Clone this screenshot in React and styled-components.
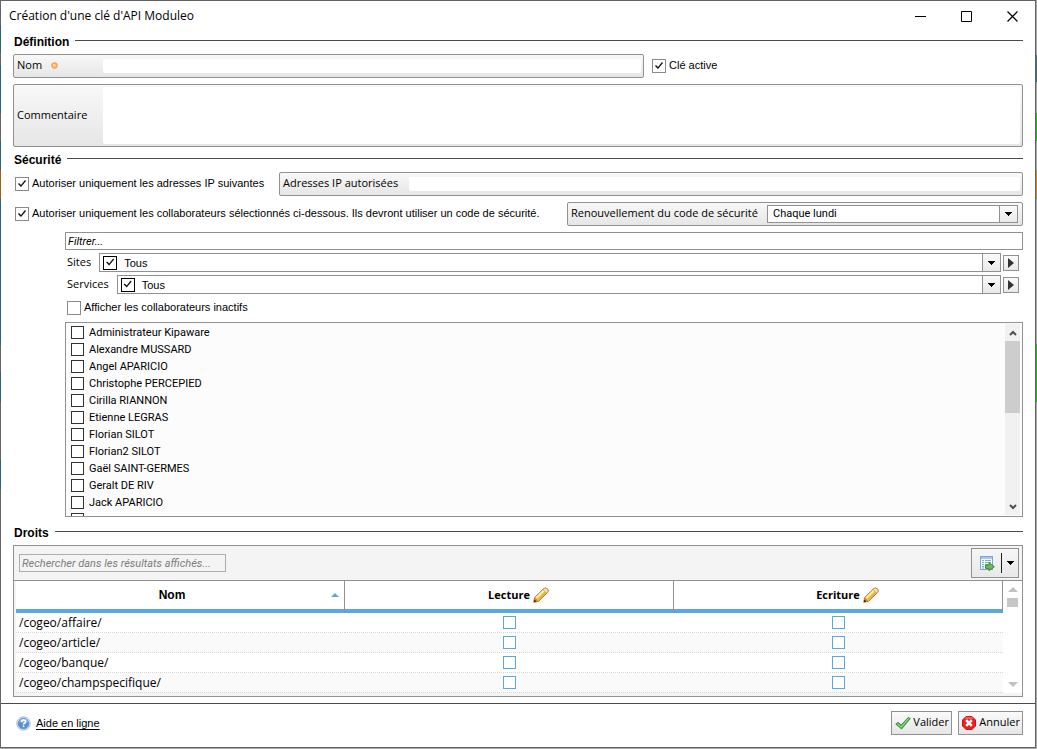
import { useState } from 'react';
import styled, { createGlobalStyle } from 'styled-components';

const GlobalStyle = createGlobalStyle`
  *, *::before, *::after {
    box-sizing: border-box;
  }

  body {
    margin: 0;
    background: #a9a9a9;
    color: #000;
    font-family: 'Liberation Sans', Arial, sans-serif;
    font-size: 11px;
    line-height: 14px;
  }

  button, input, select, textarea {
    font: inherit;
    color: inherit;
    margin: 0;
    padding: 0;
    border: 0;
    border-radius: 0;
    background: none;
    outline: none;
  }
`;

const uiFont = `'Open Sans', 'Noto Sans', sans-serif`;
const narrowFont = `Roboto, 'Liberation Sans', sans-serif`;
const line = '#919191';
const blue = '#5aa9de';

/* Edges of the application behind the dialog */
const Desktop = styled.div`
  min-height: 100vh;
  padding: 0 1px 1px 0;
  background: linear-gradient(
    #a9a9a9 55px, #3d7076 55px 82px, #a9a9a9 82px 113px, #22b422 113px 141px,
    #a9a9a9 141px 170px, #c98a1e 170px 199px, #a9a9a9 199px 344px, #22b422 344px 402px,
    #a9a9a9 402px
  );
`;

const Dialog = styled.main`
  padding-left: 1px;
  background: linear-gradient(
    #666 25px, #2a6478 25px 53px, #666 53px 65px, #2a6478 65px 113px, #666 113px 141px,
    #2a6478 141px 170px, #98651d 170px 199px, #2a6478 199px 345px, #666 345px 372px,
    #2a6478 372px 402px, #666 402px 460px, #2a6478 460px 489px, #666 489px
  );
`;

const DialogInner = styled.div`
  border: 1px solid #626262;
  border-left: 0;
  background: #fff;
`;

const TitleBar = styled.header`
  display: flex;
  align-items: center;
  height: 30px;
  padding-left: 8px;
`;

const Title = styled.h1`
  flex: 1;
  margin: 0;
  font: 400 12px/16px ${uiFont};
`;

const WindowButton = styled.button`
  display: flex;
  align-items: center;
  justify-content: center;
  width: 46px;
  height: 29px;
`;

const Content = styled.div`
  padding: 3px 12px 6px;
`;

const SectionHeader = styled.div`
  display: flex;
  gap: 6px;
  margin-bottom: 4px;
  padding-left: 1px;

  &::after {
    content: '';
    flex: 1;
    height: 1px;
    margin-top: 6px;
    background: #4b4b4b;
  }
`;

const SectionTitle = styled.h2`
  margin: 0;
  font-size: 12px;
  font-weight: 700;
  line-height: 16px;
`;

const Row = styled.div`
  display: flex;
  align-items: center;
  gap: ${(p) => p.$gap || 0}px;
  margin-bottom: 6px;
`;

const CommentRow = styled(Row)`
  margin-bottom: 5px;
`;

const CheckLabel = styled.label`
  display: flex;
  flex: none;
  gap: 3px;
  width: ${(p) => p.$width || 'auto'};
  padding-left: 2px;
  line-height: 12px;
  white-space: nowrap;
`;

const Checkbox = styled.input.attrs({ type: 'checkbox' })`
  appearance: none;
  flex: none;
  display: block;
  width: ${(p) => p.$size || 14}px;
  height: ${(p) => p.$size || 14}px;
  border: 1px solid ${(p) => p.$color || '#8a8a8a'};
  background: #fff;

  &:checked::after {
    content: '';
    display: block;
    width: 12px;
    height: 12px;
    background: #111;
    clip-path: polygon(2px 6px, 3px 5px, 5px 7px, 9px 2px, 10px 3px, 5px 9px);
  }
`;

const Field = styled.div`
  display: flex;
  flex: ${(p) => p.$flex || '1'};
  min-width: 0;
  height: ${(p) => p.$height || 24}px;
  border: 1px solid ${line};
  border-radius: 2px;
  background: linear-gradient(#f8f8f8, #e6e6e6);
`;

const FieldLabel = styled.label`
  display: flex;
  flex: none;
  align-items: center;
  gap: 9px;
  width: ${(p) => p.$width}px;
  padding: 0 0 2px 3px;
  font-family: ${uiFont};
  white-space: nowrap;
`;

const TextInput = styled.input`
  flex: 1;
  min-width: 0;
  margin: 4px 2px 4px 0;
  border-radius: 2px;
  background: #fff;
`;

const TextArea = styled.textarea`
  flex: 1;
  min-width: 0;
  margin: 2px 2px 2px 0;
  border-radius: 2px;
  background: #fff;
  resize: none;
`;

const Combo = styled.div`
  display: flex;
  flex: 1;
  align-items: center;
  min-width: 0;
  border: 1px solid ${line};
  background: #fff;
`;

const SecurityCombo = styled(Combo)`
  margin: 2px 4px 2px 0;
`;

const Select = styled.select`
  appearance: none;
  flex: 1;
  padding-left: 5px;
  font-family: ${narrowFont};
`;

const Arrow = styled.button`
  display: flex;
  flex: none;
  align-items: center;
  justify-content: center;
  align-self: stretch;
  width: 18px;
  border-left: 1px solid ${line};
  background: linear-gradient(#fafafa, #e9e9e9);
`;

const StepButton = styled(Arrow)`
  align-self: center;
  width: 16px;
  height: 16px;
  margin: 0 4px 0 2px;
  border: 1px solid ${line};
`;

const Collaborators = styled.div`
  display: flex;
  flex-direction: column;
  gap: 3px;
  margin: 0 0 8px 52px;
`;

const FilterInput = styled.input`
  height: 18px;
  padding: 0 2px;
  border: 1px solid ${line};
  background: #fff;
  font-family: ${narrowFont};
  font-style: italic;

  &::placeholder {
    color: #000;
    opacity: 1;
  }
`;

const ComboRow = styled.div`
  display: flex;
  gap: 8px;
  height: 19px;
  padding-left: 2px;
  line-height: 18px;
`;

const ComboName = styled.span`
  font-family: ${uiFont};
`;

const ComboGroup = styled.div`
  display: flex;
  flex: 1;
`;

const ComboValue = styled.label`
  display: flex;
  flex: 1;
  align-items: center;
  gap: 7px;
  padding-left: 3px;
`;

const InactiveRow = styled.div`
  padding: 4px 0;
`;

const ListBox = styled.div`
  display: flex;
  height: 195px;
  border: 1px solid ${line};
  background: #fcfcfc;
`;

const List = styled.ul`
  flex: 1;
  margin: 0;
  padding: 1px 0 0 5px;
  overflow: hidden;
  list-style: none;
  font-family: ${narrowFont};
`;

const ListItem = styled.li`
  height: 17px;

  label {
    display: flex;
    align-items: center;
    gap: 5px;
    height: 17px;
  }
`;

const ScrollBar = styled.div`
  display: flex;
  flex-direction: column;
  align-items: center;
  width: 15px;
  margin: 1px 2px 1px 0;
  background: #f1f1f1;
`;

const ScrollButton = styled.button`
  display: flex;
  align-items: center;
  justify-content: center;
  width: 15px;
  height: 17px;
`;

const Thumb = styled.div`
  width: ${(p) => p.$width}px;
  height: ${(p) => p.$height}px;
  margin-bottom: auto;
  background: ${(p) => p.$color};
`;

const Panel = styled.section`
  border: 1px solid ${line};
  background: #f4f4f4;
`;

const Toolbar = styled.div`
  display: flex;
  align-items: center;
  justify-content: space-between;
  height: 35px;
  padding: 0 3px 0 5px;
  border-bottom: 1px solid ${line};
`;

const SearchInput = styled(FilterInput)`
  width: 207px;
  border-color: #adadad;
  background: #f4f4f4;

  &::placeholder {
    color: #7d7d7d;
  }
`;

const ExportButton = styled.button`
  display: flex;
  align-items: center;
  width: 48px;
  height: 30px;
  padding-left: 7px;
  border: 1px solid ${line};
  background: linear-gradient(#f6f6f6, #e8e8e8);
`;

const ExportDivider = styled.span`
  width: 1px;
  height: 20px;
  margin: 0 5px 0 6px;
  background: #222;
`;

const TableArea = styled.div`
  display: flex;
  padding: 0 0 3px 2px;
`;

const Table = styled.table`
  flex: 1;
  width: 100%;
  border-collapse: separate;
  border-spacing: 0;
  table-layout: fixed;
  background: #fff;
  font-family: ${uiFont};
  font-size: 12px;
`;

const HeadCell = styled.th`
  height: 32px;
  padding: 0;
  border-right: 1px solid ${line};
  background: linear-gradient(#fff 28px, ${blue} 28px);
`;

const HeadContent = styled.div`
  display: flex;
  align-items: center;
  justify-content: center;
  gap: 3px;
  height: 24px;
  margin-bottom: 4px;
  font-weight: 700;
  font-size: 11px;

  /* the pencil hangs after the centred name */
  svg {
    flex: none;
    margin-right: -19px;
  }
`;

const SortContent = styled(HeadContent)`
  font-family: 'Liberation Sans', Arial, sans-serif;
  font-size: 12px;

  span {
    flex: 1;
  }

  svg {
    margin-right: 5px;
  }
`;

const Cell = styled.td`
  height: 20px;
  padding: 0 3px;
  border-bottom: 1px dotted #d5d5d5;
  line-height: 19px;

  tr:nth-child(even) & {
    background: #fafafa;
  }

  input {
    margin: 0 auto;
  }
`;

const TableScroll = styled(ScrollBar)`
  flex: none;
  width: 19px;
  margin: 0;
  background: #fff;
`;

const Footer = styled.footer`
  display: flex;
  align-items: center;
  gap: 6px;
  height: 44px;
  padding: 0 12px 5px 15px;
  border-top: 1px solid #4b4b4b;
`;

const HelpLink = styled.a`
  display: flex;
  align-items: center;
  gap: 5px;
  margin-right: auto;
  color: #000;
  text-underline-offset: 2px;
`;

const ActionButton = styled.button`
  display: flex;
  align-items: center;
  justify-content: space-between;
  width: ${(p) => p.$width}px;
  height: 24px;
  padding: 0 2px 0 3px;
  border: 1px solid ${line};
  background: linear-gradient(#fafafa, #e6e6e6);
  font-family: ${uiFont};

  span {
    padding-bottom: 2px;
  }
`;

const CaretDown = () => (
  <svg width="8" height="4" shapeRendering="crispEdges" aria-hidden="true">
    <path d="M0 0h7v1h-1v1h-1v1h-1v1h-1v-1h-1v-1h-1v-1h-1z" />
  </svg>
);

const CaretRight = () => (
  <svg width="6" height="10" aria-hidden="true">
    <path d="M0 0l6 5l-6 5z" fill="#333" />
  </svg>
);

const Chevron = ({ down }) => (
  <svg width="8" height="6" aria-hidden="true">
    <path d={down ? 'M1 1l3 3l3-3' : 'M1 5l3-3l3 3'} fill="none" stroke="#505050" strokeWidth="2" />
  </svg>
);

const Triangle = ({ down, width = 10, color = '#c2c2c2' }) => (
  <svg width={width} height={width / 2} viewBox="0 0 10 5" aria-hidden="true">
    <path d={down ? 'M0 0h10l-5 5z' : 'M0 5h10l-5-5z'} fill={color} />
  </svg>
);

const RequiredDot = () => (
  <svg width="7" height="7" aria-hidden="true">
    <circle cx="3.5" cy="3.5" r="2.8" fill="#fbc27a" stroke="#ea8e42" />
    <circle cx="3" cy="3" r="1" fill="#fde0b0" />
  </svg>
);

const Pencil = () => (
  <svg width="16" height="16" viewBox="0 0 16 16" aria-hidden="true">
    <path d="M.8 15.2l.8-4.600L10.600 1.700q2-1.500 3.800.1t.2 3.700L5.600 14.300z" fill="#f5c95a" stroke="#b5762a" />
    <path d="M3.400 10.800l7.600-7.500" stroke="#fdf0b4" strokeWidth="1.800" />
    <path d="M5.200 12.600l7.600-7.400" stroke="#e3a838" strokeWidth="1.200" />
    <path d="M10 2.600l3.600 3.400l1-1q1.200-1.300-.3-2.800t-3-.7z" fill="#f8e2bc" stroke="#c88b4a" strokeWidth=".6" />
    <path d="M2.200 10.800l3 3l-3.700 1z" fill="#d98a24" />
    <path d="M.8 15.200l.5-2.700l2.200 2z" fill="#3a2410" />
  </svg>
);

const ExportIcon = () => (
  <svg width="16" height="16" viewBox="0 0 16 16" aria-hidden="true">
    <rect x="1.500" y="1.500" width="12" height="13" fill="#f4f9ff" stroke="#7ba4dc" />
    <rect x="2" y="2" width="11" height="2" fill="#a9c6ee" />
    <path d="M3 5.500h2M6 5.500h6M3 7.500h2M6 7.500h6M3 9.500h2M6 9.500h3M3 11.500h2M3 13h2" stroke="#7fb894" />
    <path d="M6.500 10h3.500V7.500l5.400 4.200l-5.400 4v-2.300H6.500z" fill="#6cbb58" stroke="#33752c" strokeWidth=".8" />
  </svg>
);

const ValidIcon = () => (
  <svg width="16" height="14" viewBox="0 0 16 14" aria-hidden="true">
    <path d="M.8 8.200L3 6.200l3.200 2.800L13.400 1.300l1.900 1.300L6.600 13z" fill="#5db558" stroke="#2f8137" strokeWidth=".8" />
    <path d="M2.500 8l3.700 3l7.300-8.500" fill="none" stroke="#9bd88e" />
  </svg>
);

const CancelIcon = () => (
  <svg width="14" height="14" viewBox="1 1 14 14" aria-hidden="true">
    <path d="M5 1.500h6l3.500 3.500v6l-3.500 3.500H5l-3.500-3.500V5z" fill="#f01f1f" stroke="#d80e0e" />
    <path d="M5 2.200h6l1.500 1.500h-9z" fill="#ff7070" />
    <path d="M5.200 5.200l5.600 5.600M10.800 5.200l-5.600 5.600" stroke="#fff" strokeWidth="2.600" />
  </svg>
);

const HelpIcon = () => (
  <svg width="15" height="15" viewBox="0 0 15 15" aria-hidden="true">
    <circle cx="7.500" cy="7.500" r="6.800" fill="#d9e5f4" stroke="#9db8db" strokeWidth=".8" />
    <circle cx="7.500" cy="7.500" r="5.300" fill="#5f91cd" stroke="#4a78b3" strokeWidth=".6" />
    <path d="M3 6q1-3.300 4.500-3.300T12 6q-4 1.500-9 0z" fill="#94b8e4" />
    <path d="M5.600 6q0-1.900 2-1.900t2 1.600q0 1-1.100 1.500t-1 1.400" fill="none" stroke="#fff" strokeWidth="1.500" />
    <rect x="6.800" y="9.600" width="1.500" height="1.500" fill="#fff" />
  </svg>
);

const collaborators = [
  'Administrateur Kipaware',
  'Alexandre MUSSARD',
  'Angel APARICIO',
  'Christophe PERCEPIED',
  'Cirilla RIANNON',
  'Etienne LEGRAS',
  'Florian SILOT',
  'Florian2 SILOT',
  'Gaël SAINT-GERMES',
  'Geralt DE RIV',
  'Jack APARICIO',
  '',
];

const routes = ['/cogeo/affaire/', '/cogeo/article/', '/cogeo/banque/', '/cogeo/champspecifique/'];

function Section({ title }) {
  return (
    <SectionHeader>
      <SectionTitle>{title}</SectionTitle>
    </SectionHeader>
  );
}

function FilterCombo({ name }) {
  return (
    <ComboRow>
      <ComboName>{name}</ComboName>
      <ComboGroup>
        <Combo>
          <ComboValue>
            <Checkbox $color="#000" defaultChecked />
            Tous
          </ComboValue>
          <Arrow aria-label={name}><CaretDown /></Arrow>
        </Combo>
        <StepButton aria-label={name}><CaretRight /></StepButton>
      </ComboGroup>
    </ComboRow>
  );
}

function App() {
  const [renewal, setRenewal] = useState('lundi');

  return (
    <>
      <GlobalStyle />
      <Desktop>
        <Dialog>
          <DialogInner>
            <TitleBar>
              <Title>Création d'une clé d'API Moduleo</Title>
              <WindowButton aria-label="Réduire">
                <svg width="11" height="11"><path d="M0 5.500h11" stroke="#000" /></svg>
              </WindowButton>
              <WindowButton aria-label="Agrandir">
                <svg width="11" height="11"><path d="M.5.5h10v10H.5z" fill="none" stroke="#000" /></svg>
              </WindowButton>
              <WindowButton aria-label="Fermer">
                <svg width="11" height="11"><path d="M.5.5l10 10M10.500.5l-10 10" stroke="#000" strokeWidth="1.200" /></svg>
              </WindowButton>
            </TitleBar>

            <Content>
              <Section title="Définition" />
              <Row $gap={6}>
                <Field $flex="0 1 631px">
                  <FieldLabel htmlFor="nom" $width={89}>Nom <RequiredDot /></FieldLabel>
                  <TextInput id="nom" />
                </Field>
                <CheckLabel>
                  <Checkbox defaultChecked />
                  Clé active
                </CheckLabel>
              </Row>
              <CommentRow>
                <Field $height={63}>
                  <FieldLabel htmlFor="commentaire" $width={89}>Commentaire</FieldLabel>
                  <TextArea id="commentaire" />
                </Field>
              </CommentRow>

              <Section title="Sécurité" />
              <Row>
                <CheckLabel $width="266px">
                  <Checkbox defaultChecked />
                  Autoriser uniquement les adresses IP suivantes
                </CheckLabel>
                <Field>
                  <FieldLabel htmlFor="adresses" $width={129}>Adresses IP autorisées</FieldLabel>
                  <TextInput id="adresses" />
                </Field>
              </Row>
              <Row>
                <CheckLabel $width="554px">
                  <Checkbox defaultChecked />
                  Autoriser uniquement les collaborateurs sélectionnés ci-dessous. Ils devront utiliser un code de sécurité.
                </CheckLabel>
                <Field>
                  <FieldLabel htmlFor="renouvellement" $width={199}>Renouvellement du code de sécurité</FieldLabel>
                  <SecurityCombo>
                    <Select id="renouvellement" value={renewal} onChange={(e) => setRenewal(e.target.value)}>
                      <option value="lundi">Chaque lundi</option>
                    </Select>
                    <Arrow as="span"><CaretDown /></Arrow>
                  </SecurityCombo>
                </Field>
              </Row>

              <Collaborators>
                <FilterInput placeholder="Filtrer..." aria-label="Filtrer" />
                <FilterCombo name="Sites" />
                <FilterCombo name="Services" />
                <InactiveRow>
                  <CheckLabel>
                    <Checkbox />
                    Afficher les collaborateurs inactifs
                  </CheckLabel>
                </InactiveRow>
                <ListBox>
                  <List>
                    {collaborators.map((name) => (
                      <ListItem key={name}>
                        <label>
                          <Checkbox $size={13} $color="#333" />
                          {name}
                        </label>
                      </ListItem>
                    ))}
                  </List>
                  <ScrollBar>
                    <ScrollButton aria-label="Monter"><Chevron /></ScrollButton>
                    <Thumb $width={15} $height={72} $color="#cdcdcd" />
                    <ScrollButton aria-label="Descendre"><Chevron down /></ScrollButton>
                  </ScrollBar>
                </ListBox>
              </Collaborators>

              <Section title="Droits" />
              <Panel>
                <Toolbar>
                  <SearchInput placeholder="Rechercher dans les résultats affichés..." aria-label="Rechercher" />
                  <ExportButton aria-label="Exporter">
                    <ExportIcon />
                    <ExportDivider />
                    <CaretDown />
                  </ExportButton>
                </Toolbar>
                <TableArea>
                  <Table>
                    <thead>
                      <tr>
                        <HeadCell>
                          <SortContent><span>Nom</span><Triangle width={8} color={blue} /></SortContent>
                        </HeadCell>
                        <HeadCell><HeadContent>Lecture <Pencil /></HeadContent></HeadCell>
                        <HeadCell><HeadContent>Ecriture <Pencil /></HeadContent></HeadCell>
                      </tr>
                    </thead>
                    <tbody>
                      {routes.map((route) => (
                        <tr key={route}>
                          <Cell>{route}</Cell>
                          <Cell><Checkbox $size={13} $color={blue} aria-label={`Lecture ${route}`} /></Cell>
                          <Cell><Checkbox $size={13} $color={blue} aria-label={`Ecriture ${route}`} /></Cell>
                        </tr>
                      ))}
                    </tbody>
                  </Table>
                  <TableScroll>
                    <ScrollButton aria-label="Monter"><Triangle /></ScrollButton>
                    <Thumb $width={11} $height={9} $color="#c6c6c6" />
                    <ScrollButton aria-label="Descendre"><Triangle down /></ScrollButton>
                  </TableScroll>
                </TableArea>
              </Panel>
            </Content>

            <Footer>
              <HelpLink href="#aide"><HelpIcon /> Aide en ligne</HelpLink>
              <ActionButton $width={61}><ValidIcon /><span>Valider</span></ActionButton>
              <ActionButton $width={65}><CancelIcon /><span>Annuler</span></ActionButton>
            </Footer>
          </DialogInner>
        </Dialog>
      </Desktop>
    </>
  );
}

export default App;
